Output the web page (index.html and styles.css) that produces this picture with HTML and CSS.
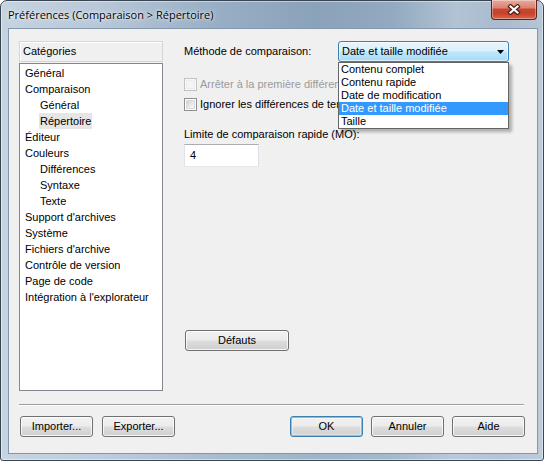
FILE: index.html
```html
<!DOCTYPE html>
<html lang="fr">
<head>
<meta charset="utf-8">
<title>Préférences</title>
<link rel="stylesheet" href="styles.css">
</head>
<body>
<div class="window">
  <div class="titlebar">
    <span class="title">Préférences (Comparaison &gt; Répertoire)</span>
    <div class="close" aria-label="Fermer">
      <svg width="14" height="11" viewBox="0 0 14 11">
        <path d="M3.5 2.5 L10.5 8.5 M10.5 2.5 L3.5 8.5" stroke="#4b1d16" stroke-width="4.4" stroke-linecap="square" fill="none"/>
        <path d="M3.5 2.5 L10.5 8.5 M10.5 2.5 L3.5 8.5" stroke="#ffffff" stroke-width="2.2" stroke-linecap="square" fill="none"/>
      </svg>
    </div>
  </div>
  <div class="frame">
    <div class="client">
      <div class="main">
        <div class="categories">
          <div class="cat-header">Catégories</div>
          <ul class="cat-list">
            <li><span>Général</span></li>
            <li><span>Comparaison</span></li>
            <li class="sub"><span>Général</span></li>
            <li class="sub"><span class="sel">Répertoire</span></li>
            <li><span>Éditeur</span></li>
            <li><span>Couleurs</span></li>
            <li class="sub"><span>Différences</span></li>
            <li class="sub"><span>Syntaxe</span></li>
            <li class="sub"><span>Texte</span></li>
            <li><span>Support d'archives</span></li>
            <li><span>Système</span></li>
            <li><span>Fichiers d'archive</span></li>
            <li><span>Contrôle de version</span></li>
            <li><span>Page de code</span></li>
            <li><span>Intégration à l'explorateur</span></li>
          </ul>
        </div>
        <div class="panel">
          <div class="row-method">
            <span class="method-label">Méthode de comparaison:</span>
            <div class="combo-wrap">
              <div class="combo">
                <span class="combo-text">Date et taille modifiée</span>
                <svg class="arrow" width="7" height="4" viewBox="0 0 7 4"><path d="M0 0 H7 L3.5 4 Z" fill="#000"/></svg>
              </div>
              <ul class="dropdown">
                <li>Contenu complet</li>
                <li>Contenu rapide</li>
                <li>Date de modification</li>
                <li class="hl">Date et taille modifiée</li>
                <li>Taille</li>
              </ul>
            </div>
          </div>
          <div class="check disabled"><span class="box"></span><span class="check-text">Arrêter à la première différence</span></div>
          <div class="check second"><span class="box"></span><span class="check-text">Ignorer les différences de temps de fichier</span></div>
          <div class="limit-label">Limite de comparaison rapide (MO):</div>
          <div class="textbox">4</div>
          <div class="btn defaults">Défauts</div>
        </div>
      </div>
      <div class="separator"></div>
      <div class="footer">
        <div class="btn">Importer...</div>
        <div class="btn export">Exporter...</div>
        <span class="spacer"></span>
        <div class="btn default">OK</div>
        <div class="btn">Annuler</div>
        <div class="btn">Aide</div>
      </div>
    </div>
  </div>
</div>
</body>
</html>
```
FILE: styles.css
```css
* { box-sizing: border-box; }
html, body { margin: 0; padding: 0; }
body {
  width: 544px;
  height: 461px;
  overflow: hidden;
  background: #ffffff;
  font-family: "Liberation Sans", Arial, sans-serif;
  font-size: 11px;
  color: #000;
}
.window {
  width: 544px;
  height: 461px;
  border: 1px solid #3a4552;
  border-radius: 7px 7px 3px 3px;
  background:
    linear-gradient(180deg, rgba(255,255,255,0) 0%, rgba(255,255,255,0) 6%, rgba(200,214,229,0.35) 12%, rgba(200,214,229,0.35) 100%),
    linear-gradient(90deg, #c6d3e0 0%, #b8c8d9 18%, #98aec4 40%, #8aa2ba 58%, #92a9c0 72%, #b2c3d4 84%, #a9bbcd 92%, #b7c6d6 100%);
  box-shadow: inset 0 0 0 1px rgba(255,255,255,0.45);
  display: flex;
  flex-direction: column;
}
.titlebar {
  height: 27px;
  flex: none;
  display: flex;
  justify-content: space-between;
  align-items: flex-start;
  padding: 0 6px 0 7px;
}
.title {
  font-family: "Open Sans", "Noto Sans", sans-serif;
  font-size: 11px;
  line-height: 15px;
  margin-top: 6px;
  color: #000;
  text-shadow: 0 0 5px rgba(255,255,255,0.9), 0 0 2px rgba(255,255,255,0.8);
}
.close {
  width: 46px;
  height: 20px;
  margin-top: -1px;
  border: 1px solid #5e2219;
  border-top: none;
  border-radius: 0 0 4px 4px;
  background: linear-gradient(180deg, #e8ab9e 0%, #dc8473 40%, #c8452f 50%, #c64229 70%, #d7654b 100%);
  box-shadow: inset 0 0 0 1px rgba(255,255,255,0.35);
  display: flex;
  align-items: center;
  justify-content: center;
}
.frame {
  flex: 1;
  display: flex;
  padding: 0 5px 6px 7px;
}
.client {
  flex: 1;
  border: 1px solid #8396ab;
  background: #f0f0f0;
  padding: 12px 12px 16px 10px;
  display: flex;
  flex-direction: column;
}
.main {
  height: 350px;
  flex: none;
  display: flex;
  align-items: flex-start;
}
.categories {
  width: 144px;
  flex: none;
  display: flex;
  flex-direction: column;
}
.cat-header {
  height: 21px;
  border: 1px solid #d5d5d5;
  box-shadow: inset 1px 1px 0 #ffffff;
  padding-left: 3px;
  line-height: 19px;
}
.cat-list {
  list-style: none;
  margin: 1px 0 0 0;
  height: 328px;
  border: 1px solid #828790;
  background: #ffffff;
  padding: 1px 0 0 5px;
}
.cat-list li {
  height: 16px;
  line-height: 16px;
  white-space: nowrap;
}
.cat-list li span { padding: 0 1px 0 0; }
.cat-list li.sub { padding-left: 14px; }
.cat-list li.sub span { padding: 0 1px; display: inline-block; height: 16px; }
.cat-list li span.sel { background: #e6e6e6; }
.panel {
  flex: 1;
  margin-left: 21px;
  display: flex;
  flex-direction: column;
  align-items: flex-start;
}
.row-method {
  display: flex;
  align-items: center;
  height: 21px;
}
.method-label {
  width: 154px;
  line-height: 13px;
}
.combo-wrap {
  position: relative;
  width: 171px;
  height: 21px;
}
.combo {
  height: 21px;
  border: 1px solid #3c7fb1;
  border-radius: 3px;
  background: linear-gradient(180deg, #e8f5fd 0%, #d9f0fc 48%, #bee6fd 52%, #a9dbf6 100%);
  box-shadow: inset 0 0 0 1px rgba(255,255,255,0.55);
  display: flex;
  align-items: center;
  justify-content: space-between;
  padding: 0 4px 0 3px;
}
.combo-text { line-height: 13px; }
.arrow { display: block; }
.dropdown {
  position: absolute;
  z-index: 5;
  top: 21px;
  left: 0;
  width: 171px;
  height: 67px;
  margin: 0;
  padding: 0;
  list-style: none;
  background: #ffffff;
  border: 1px solid #646464;
  box-shadow: 3px 3px 3px rgba(0,0,0,0.28);
}
.dropdown li {
  height: 13px;
  line-height: 13px;
  padding-left: 2px;
  white-space: nowrap;
}
.dropdown li.hl {
  background: #3399ff;
  color: #ffffff;
}
.check {
  display: flex;
  align-items: center;
  width: 154px;
  height: 13px;
  overflow: hidden;
  margin-top: 16px;
  white-space: nowrap;
}
.check.second { margin-top: 7px; }
.box {
  width: 13px;
  height: 13px;
  flex: none;
  margin-right: 3px;
  border: 1px solid #8e8f8f;
  background: #ffffff;
  padding: 1px;
  display: flex;
}
.box::after {
  content: "";
  flex: 1;
  background: linear-gradient(135deg, #cfd1d4 0%, #e6e7e9 50%, #f8f8f8 100%);
  border: 1px solid #d8d9dc;
}
.check-text {
  display: block;
  flex: 1;
  min-width: 0;
  overflow: hidden;
  line-height: 13px;
}
.check.disabled { color: #9b9b9b; }
.check.disabled .box { border-color: #c3c3c3; background: #f7f7f7; }
.check.disabled .box::after { background: #f4f4f4; border-color: #ececec; }
.limit-label {
  margin-top: 17px;
  line-height: 13px;
  white-space: nowrap;
}
.textbox {
  margin-top: 3px;
  width: 75px;
  height: 23px;
  border: 1px solid;
  border-color: #abadb3 #dbdfe6 #e3e9ef #e2e3ea;
  background: #ffffff;
  padding-left: 5px;
  line-height: 21px;
}
.btn {
  width: 73px;
  height: 21px;
  border: 1px solid #707070;
  border-radius: 3px;
  background: linear-gradient(180deg, #f2f2f2 0%, #ebebeb 48%, #dddddd 52%, #cfcfcf 100%);
  box-shadow: inset 0 0 0 1px rgba(255,255,255,0.75);
  display: flex;
  align-items: center;
  justify-content: center;
  line-height: 13px;
  flex: none;
}
.btn.defaults {
  margin-top: 163px;
  margin-left: 1px;
  width: 104px;
}
.btn.default {
  border-color: #3c7fb1;
  box-shadow: inset 0 0 0 1px #5ed1f7, inset 0 0 0 2px rgba(255,255,255,0.4);
}
.separator {
  flex: none;
  height: 2px;
  margin: 13px 1px 0 0;
  border-top: 1px solid #a0a0a0;
  border-bottom: 1px solid #ffffff;
}
.footer {
  flex: none;
  display: flex;
  gap: 8px;
  margin-top: 10px;
  padding-left: 1px;
}
.btn.export { margin-left: 1px; }
.spacer { flex: 1; }
```
